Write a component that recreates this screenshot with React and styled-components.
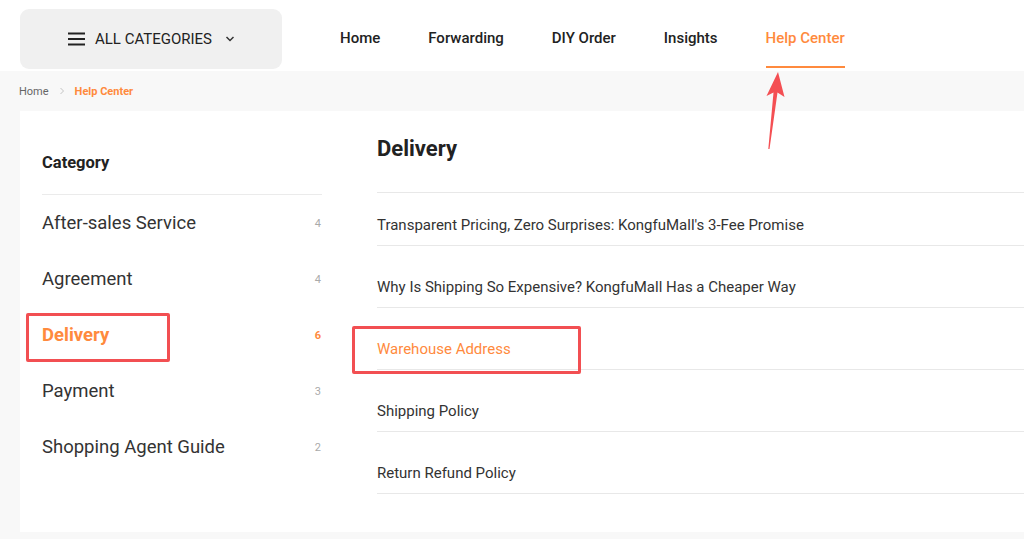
import React from "react";
import styled, { createGlobalStyle } from "styled-components";

const ORANGE = "#ff8a3d";
const RED = "#f24f52";

const Global = createGlobalStyle`
  html, body { margin: 0; padding: 0; }
  body {
    background: #f8f8f8;
    font-family: Roboto, "Liberation Sans", Arial, sans-serif;
    color: #333;
    overflow: hidden;
  }
  * { box-sizing: border-box; }
`;

const Page = styled.div`
  position: relative;
  width: 1024px;
  height: 539px;
  overflow: hidden;
`;

const Header = styled.header`
  height: 71px;
  background: #fff;
  display: flex;
  align-items: flex-start;
  padding: 9px 0 0 20px;
`;

const CategoriesButton = styled.div`
  width: 262px;
  height: 60px;
  background: #f0f0f0;
  border-radius: 9px;
  display: flex;
  align-items: center;
  justify-content: center;
  gap: 10px;
  font-size: 15px;
  color: #222;
`;

const Nav = styled.nav`
  display: flex;
  gap: 48px;
  margin-left: 58px;
  margin-top: -9px;
`;

const NavItem = styled.div`
  height: 68px;
  padding-top: 10px;
  display: flex;
  align-items: center;
  font-size: 15px;
  font-weight: 500;
  color: ${(p) => (p.$active ? ORANGE : "#222")};
  border-bottom: 2px solid ${(p) => (p.$active ? ORANGE : "transparent")};
`;

const Breadcrumb = styled.div`
  height: 40px;
  display: flex;
  align-items: center;
  padding-left: 19px;
  font-size: 11px;
  color: #666;
  gap: 9px;
`;

const Crumb = styled.span`
  color: ${(p) => (p.$active ? ORANGE : "#666")};
  font-weight: ${(p) => (p.$active ? 700 : 400)};
`;

const Card = styled.div`
  margin-left: 20px;
  height: 421px;
  background: #fff;
  display: flex;
`;

const Sidebar = styled.aside`
  width: 302px;
  padding-left: 22px;
  padding-top: 42px;
  flex-shrink: 0;
`;

const SideTitle = styled.div`
  font-size: 16.5px;
  font-weight: 700;
  line-height: 20px;
  color: #222;
  padding-bottom: 21px;
  border-bottom: 1px solid #ebebeb;
`;

const SideItem = styled.div`
  position: relative;
  height: 56px;
  display: flex;
  align-items: center;
  justify-content: space-between;
  padding-right: 1px;
`;

const SideLabel = styled.span`
  font-size: 18.5px;
  color: ${(p) => (p.$active ? ORANGE : "#333")};
  font-weight: ${(p) => (p.$active ? 700 : 400)};
`;

const Count = styled.span`
  font-size: 11px;
  color: ${(p) => (p.$active ? ORANGE : "#aaa")};
  font-weight: ${(p) => (p.$active ? 700 : 400)};
`;

const Main = styled.main`
  flex: 1;
  margin-left: 55px;
`;

const MainTitle = styled.h1`
  margin: 0;
  font-size: 22px;
  font-weight: 700;
  line-height: 28px;
  color: #222;
  padding: 24px 0 29px;
  border-bottom: 1px solid #e8e8e8;
`;

const Article = styled.div`
  position: relative;
  margin-top: 20px;
  padding: 11px 0 10px;
  line-height: 20px;
  font-size: 15px;
  color: ${(p) => (p.$active ? ORANGE : "#333")};
  border-bottom: 1px solid #e8e8e8;
  &:first-of-type { margin-top: 11px; }
`;

const Highlight = styled.div`
  position: absolute;
  border: 3px solid ${RED};
  border-radius: 2px;
  pointer-events: none;
  left: ${(p) => p.$left}px;
  top: ${(p) => p.$top}px;
  width: ${(p) => p.$w}px;
  height: ${(p) => p.$h}px;
`;

const Arrow = styled.svg`
  position: absolute;
  left: 0;
  top: 0;
  pointer-events: none;
`;

const categories = [
  { name: "After-sales Service", count: 4 },
  { name: "Agreement", count: 4 },
  { name: "Delivery", count: 6, active: true },
  { name: "Payment", count: 3 },
  { name: "Shopping Agent Guide", count: 2 },
];

const articles = [
  { title: "Transparent Pricing, Zero Surprises: KongfuMall's 3-Fee Promise" },
  { title: "Why Is Shipping So Expensive? KongfuMall Has a Cheaper Way" },
  { title: "Warehouse Address", active: true },
  { title: "Shipping Policy" },
  { title: "Return Refund Policy" },
];

const navs = ["Home", "Forwarding", "DIY Order", "Insights", "Help Center"];

export default function App() {
  return (
    <Page>
      <Global />
      <Header>
        <CategoriesButton>
          <svg width="17" height="14" viewBox="0 0 17 14">
            <rect x="0" y="0.5" width="17" height="2" fill="#222" />
            <rect x="0" y="6" width="17" height="2" fill="#222" />
            <rect x="0" y="11.5" width="17" height="2" fill="#222" />
          </svg>
          <span>ALL CATEGORIES</span>
          <svg width="12" height="10" viewBox="0 0 12 10">
            <path d="M4.5 3 L8 6.5 L11.5 3" fill="none" stroke="#333" strokeWidth="1.5" />
          </svg>
        </CategoriesButton>
        <Nav>
          {navs.map((n) => (
            <NavItem key={n} $active={n === "Help Center"}>{n}</NavItem>
          ))}
        </Nav>
      </Header>
      <Breadcrumb>
        <Crumb>Home</Crumb>
        <svg width="8" height="8" viewBox="0 0 8 8">
          <path d="M2.5 1 L5.5 4 L2.5 7" fill="none" stroke="#c4c4c4" strokeWidth="1" />
        </svg>
        <Crumb $active>Help Center</Crumb>
      </Breadcrumb>
      <Card>
        <Sidebar>
          <SideTitle>Category</SideTitle>
          {categories.map((c) => (
            <SideItem key={c.name}>
              <SideLabel $active={c.active}>{c.name}</SideLabel>
              <Count $active={c.active}>{c.count}</Count>
              {c.active && <Highlight $left={-16} $top={6} $w={144} $h={49} />}
            </SideItem>
          ))}
        </Sidebar>
        <Main>
          <MainTitle>Delivery</MainTitle>
          {articles.map((a) => (
            <Article key={a.title} $active={a.active}>
              {a.title}
              {a.active && <Highlight $left={-25} $top={-2} $w={229} $h={48} />}
            </Article>
          ))}
        </Main>
      </Card>
      <Arrow width="1024" height="539" viewBox="0 0 1024 539">
        <polygon
          points="778,72 784.5,97 777.5,92.5 769.5,149 768.3,149 773.5,92.5 766.5,96"
          fill="#f44f53"
        />
      </Arrow>
    </Page>
  );
}
